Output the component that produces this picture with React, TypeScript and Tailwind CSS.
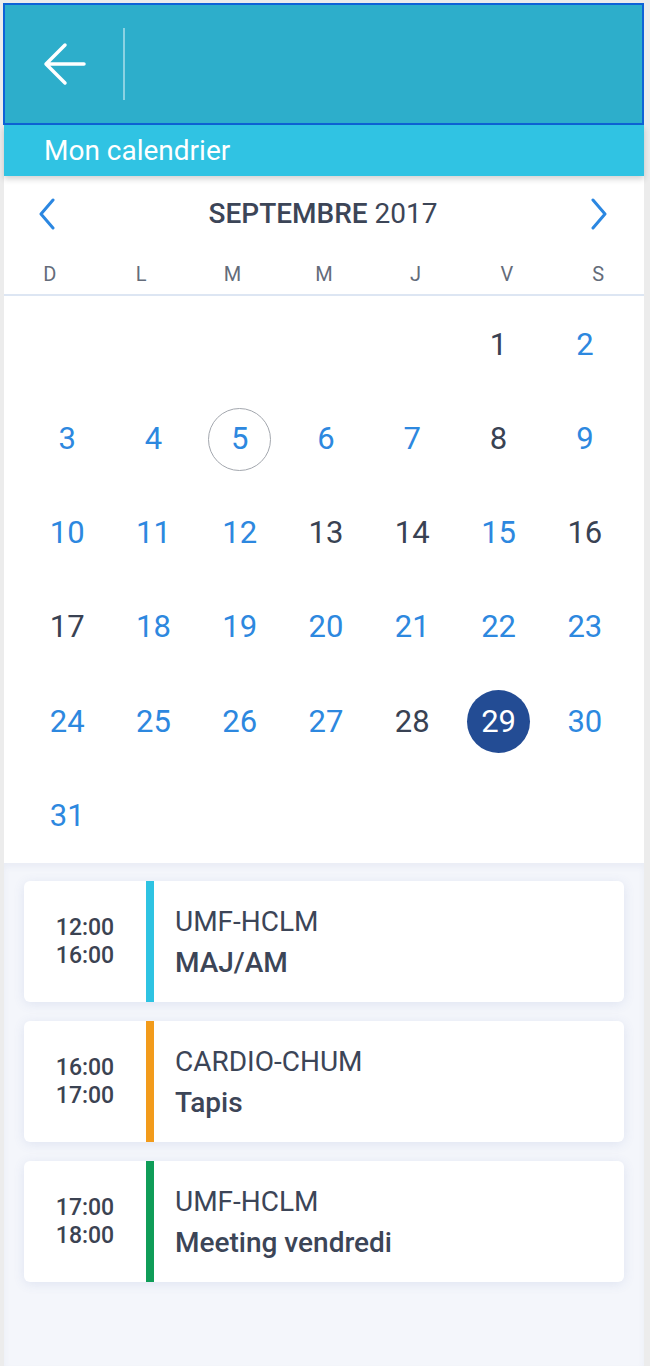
import React from "react";

const weekDays = ["D", "L", "M", "M", "J", "V", "S"];

// jours en noir (les autres sont en bleu)
const darkDays = [1, 8, 13, 14, 16, 17, 28];
const today = 5;
const selected = 29;
const firstOffset = 5; // 1er septembre 2017 = vendredi

const events = [
  { start: "12:00", end: "16:00", place: "UMF-HCLM", title: "MAJ/AM", color: "bg-[#2ec3e2]" },
  { start: "16:00", end: "17:00", place: "CARDIO-CHUM", title: "Tapis", color: "bg-[#f29b1b]" },
  { start: "17:00", end: "18:00", place: "UMF-HCLM", title: "Meeting vendredi", color: "bg-[#0f9d58]" },
];

function DayCell({ day }: { day: number }) {
  let circle = "";
  let color = darkDays.includes(day) ? "text-[#394253]" : "text-[#2d88df]";
  if (day === today) circle = "border-[1.5px] border-[#a3a7ae]";
  if (day === selected) {
    circle = "bg-[#234c94]";
    color = "text-white";
  }
  return (
    <div className="flex items-center justify-center">
      <span className={`flex h-[63px] w-[63px] items-center justify-center rounded-full text-[31px] ${circle} ${color}`}>{day}</span>
    </div>
  );
}

export default function App() {
  const cells: (number | null)[] = [...Array(firstOffset).fill(null), ...Array.from({ length: 30 }, (_, i) => i + 1), 31];

  return (
    <div className="flex min-h-[1366px] w-[650px] bg-[#ececec] pl-[4px] font-['Roboto','Noto_Sans',sans-serif]">
      <div className="flex w-[640px] flex-col pt-[3px]">
        {/* en-tête */}
        <div className="-ml-px flex h-[122px] items-center border-2 border-[#0e63d7] bg-[#2daecb]">
          <button type="button" className="ml-[36px] flex h-[48px] w-[48px] items-center justify-center">
            <svg width="44" height="44" viewBox="0 0 44 44" fill="none" stroke="white" strokeWidth="3.5" strokeLinecap="round" strokeLinejoin="round">
              <path d="M41 22H4M22 3L3 22l19 19" />
            </svg>
          </button>
          <div className="ml-[34px] h-[72px] w-[2px] bg-white/45" />
        </div>

        <div className="relative z-10 flex h-[51px] items-center bg-[#30c3e3] pl-[40px] text-[28px] text-white shadow-[0_3px_6px_rgba(0,0,0,0.18)]">Mon calendrier</div>

        {/* calendrier */}
        <div className="bg-white">
          <div className="flex h-[76px] items-center justify-between pl-[32px] pr-[34px]">
            <svg width="24" height="32" viewBox="0 0 24 32" fill="none" stroke="#2b87e1" strokeWidth="3" strokeLinecap="round" strokeLinejoin="round">
              <path d="M17 2L5 16l12 14" />
            </svg>
            <p className="text-[28px] text-[#3c4557]">
              <span className="font-medium">SEPTEMBRE</span> 2017
            </p>
            <svg width="24" height="32" viewBox="0 0 24 32" fill="none" stroke="#2b87e1" strokeWidth="3" strokeLinecap="round" strokeLinejoin="round">
              <path d="M7 2l12 14L7 30" />
            </svg>
          </div>

          <div className="grid h-[44px] grid-cols-7 items-center border-b-2 border-[#dde6f3] pt-[2px]">
            {weekDays.map((d, i) => (
              <span key={i} className="text-center text-[20px] text-[#646c7a]">
                {d}
              </span>
            ))}
          </div>

          <div className="ml-[20px] grid w-[604px] auto-rows-[94.2px] grid-cols-7 pt-[2px]">
            {cells.map((day, i) => (day ? <DayCell key={i} day={day} /> : <div key={i} />))}
          </div>
        </div>

        {/* événements */}
        <div className="flex flex-1 flex-col gap-[19px] bg-[#f4f6fb] px-[20px] pt-[18px] shadow-[inset_0_4px_6px_rgba(60,90,160,0.06)]">
          {events.map((ev, i) => (
            <div key={i} className="flex h-[121px] overflow-hidden rounded-[6px] bg-white shadow-[0_2px_12px_rgba(70,100,170,0.12)]">
              <div className="flex w-[122px] flex-col items-center justify-center text-[23px] font-medium leading-[28px] text-[#3b4352]">
                <span>{ev.start}</span>
                <span>{ev.end}</span>
              </div>
              <div className={`w-[8px] ${ev.color}`} />
              <div className="flex flex-col justify-center pl-[21px] text-[28px] leading-[41px] text-[#3c4557]">
                <span>{ev.place}</span>
                <span className="font-medium">{ev.title}</span>
              </div>
            </div>
          ))}
        </div>
      </div>
    </div>
  );
}
